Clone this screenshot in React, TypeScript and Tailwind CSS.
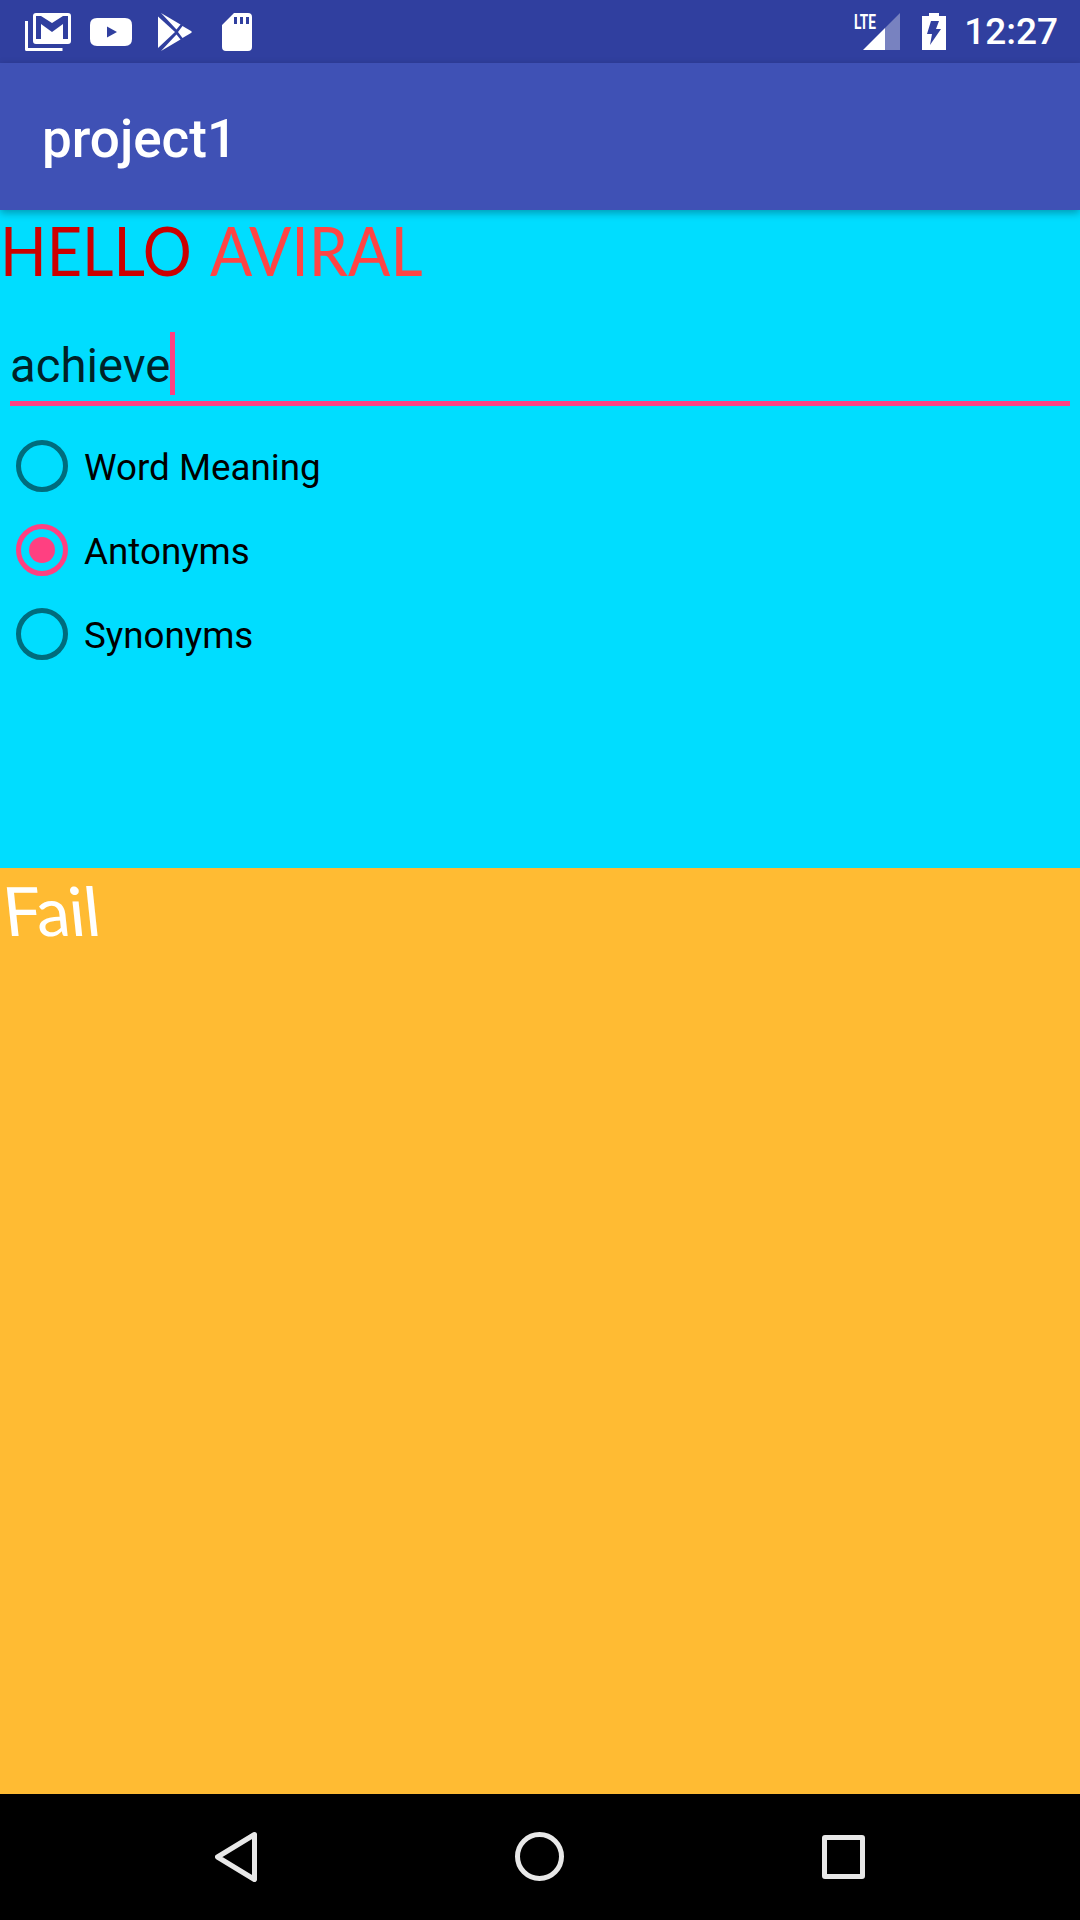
const roboto = { fontFamily: 'Roboto, sans-serif' }
const lato = { fontFamily: 'Lato, sans-serif' }

function GmailIcon() {
  return (
    <svg width="46" height="38" viewBox="0 0 46 38" fill="none">
      <path d="M1.500 8v28.500h36" stroke="#fff" strokeWidth="3" strokeLinejoin="round" />
      <path fillRule="evenodd" fill="#fff" d="M11 0h32q3 0 3 3v25q0 3-3 3H11q-3 0-3-3V3q0-3 3-3zM11 3v23h5V11l11 8 11-8v15h5V3h-5L27 10 16 3z" />
    </svg>
  )
}

function YoutubeIcon() {
  return (
    <svg width="42" height="28" viewBox="0 0 42 28">
      <path fillRule="evenodd" fill="#fff" d="M7 0h28q7 0 7 7v14q0 7-7 7H7q-7 0-7-7V7q0-7 7-7zM17 8.500v11l10-5.500z" />
    </svg>
  )
}

function PlayIcon() {
  return (
    <svg width="34" height="38" viewBox="0 0 34 38" fill="#fff">
      <path d="M0 3.500L17 19 0 35z" />
      <path d="M3 0L22.500 11.500 18.500 16.500z" />
      <path d="M3 38L22.500 26.500 18.500 21.500z" />
      <path d="M24.500 13L33 18q1.500 1 0 2L24.500 25 20 19z" />
    </svg>
  )
}

function SdIcon() {
  return (
    <svg width="30" height="38" viewBox="0 0 30 38">
      <path fillRule="evenodd" fill="#fff" d="M12 0h14q4 0 4 4v30q0 4-4 4H4q-4 0-4-4V12zM12 4v7h3V4zM18 4v7h3V4zM24 4v7h3V4z" />
    </svg>
  )
}

function SignalIcon() {
  return (
    <svg width="38" height="37" viewBox="0 0 38 37">
      <path d="M37 0v37H22V15z" fill="#fff" fillOpacity="0.35" />
      <path d="M22 15v22H0z" fill="#fff" />
    </svg>
  )
}

function BatteryIcon() {
  return (
    <svg width="24" height="37" viewBox="0 0 24 37">
      <path fillRule="evenodd" fill="#fff" d="M7 0h10v3h7v34H0V3h7zM9 8h8l-3 8h5L8 32l2-11H5z" />
    </svg>
  )
}

function StatusBar() {
  return (
    <div className="flex h-[63px] items-center justify-between bg-[#303f9f] pl-[25px] pr-[22px] text-white">
      <div className="flex items-center">
        <GmailIcon />
        <div className="ml-[19px]"><YoutubeIcon /></div>
        <div className="ml-[26px]"><PlayIcon /></div>
        <div className="ml-[30px]"><SdIcon /></div>
      </div>
      <div className="flex items-center">
        <div className="relative h-[37px] w-[47px]">
          <div className="ml-[9px]"><SignalIcon /></div>
          <span className="absolute left-0 top-[-1px] origin-top-left scale-x-[0.65] text-[21px] font-bold leading-[21px]" style={roboto}>LTE</span>
        </div>
        <div className="ml-[21px]"><BatteryIcon /></div>
        <span className="ml-[18px] text-[37px] font-medium leading-none" style={roboto}>12:27</span>
      </div>
    </div>
  )
}

function RadioRow({ label, checked }: { label: string; checked?: boolean }) {
  return (
    <div className="flex h-[84px] items-center pl-[16px]">
      <div className={`flex h-[52px] w-[52px] items-center justify-center rounded-full border-[5px] ${checked ? 'border-[#ff4081]' : 'border-[#006c7d]'}`}>
        {checked && <div className="h-[26px] w-[26px] rounded-full bg-[#ff4081]" />}
      </div>
      <span className="ml-[16px] pt-[3px] text-[36.750px] text-black" style={roboto}>{label}</span>
    </div>
  )
}

function NavBar() {
  return (
    <div className="flex h-[126px] items-start justify-between bg-black pl-[215px] pr-[215px] pt-[38px]">
      <svg width="42" height="50" viewBox="0 0 42 50" fill="none">
        <path d="M39.500 2.500L2.500 25l37 22.500z" stroke="#e8e8e8" strokeWidth="5" strokeLinejoin="round" />
      </svg>
      <div className="h-[49px] w-[49px] rounded-full border-[5px] border-[#e8e8e8]" />
      <div className="mt-[3px] h-[44px] w-[43px] rounded-[3px] border-[5px] border-[#e8e8e8]" />
    </div>
  )
}

export default function App() {
  return (
    <div className="flex h-[1920px] w-[1080px] flex-col overflow-hidden">
      <StatusBar />

      {/* Toolbar */}
      <div className="relative z-10 flex h-[147px] items-center bg-[#3f51b5] pl-[42px] pt-[6px] shadow-[0_3px_8px_rgba(0,0,0,0.3)]">
        <span className="text-[53px] font-medium text-white" style={roboto}>project1</span>
      </div>

      {/* Form */}
      <div className="flex h-[658px] flex-col bg-[#00ddff]">
        <div className="mt-[5px] flex h-[70px] items-center whitespace-nowrap text-[68px] leading-none" style={lato}>
          <span className="inline-block w-[186px] origin-left scale-x-90 text-[#cc0000]">HELLO</span>
          <span className="ml-[24px] inline-block w-[212px] origin-left scale-x-[0.92] text-[#ff4444]">AVIRAL</span>
        </div>
        <div className="mx-[10px] mt-[47px] flex h-[74px] items-start border-b-[5px] border-[#ff4081]">
          <span className="pt-[3px] text-[47.250px] leading-[63px] text-black/85" style={roboto}>achieve</span>
          <div className="h-[63px] w-[5px] bg-[#ff4081]" />
        </div>
        <div className="mt-[18px]">
          <RadioRow label="Word Meaning" />
          <RadioRow label="Antonyms" checked />
          <RadioRow label="Synonyms" />
        </div>
      </div>

      {/* Result */}
      <div className="flex flex-1 flex-col bg-[#ffbb33]">
        <div className="mt-[14px] w-fit origin-top-left skew-x-6 text-[68px] leading-[56px] tracking-[-1px] text-white" style={lato}>Fail</div>
      </div>

      <NavBar />
    </div>
  )
}
